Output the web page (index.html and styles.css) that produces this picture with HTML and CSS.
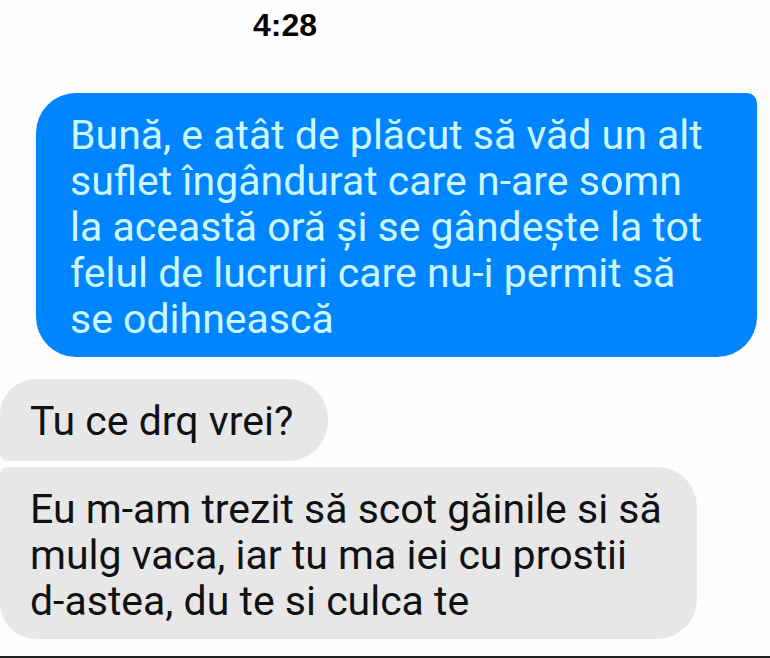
FILE: index.html
```html
<!DOCTYPE html>
<html lang="ro">
<head>
<meta charset="utf-8">
<meta name="viewport" content="width=device-width, initial-scale=1">
<title>Chat</title>
<link rel="stylesheet" href="styles.css">
</head>
<body>
<main class="chat">
  <time class="time">4:28</time>
  <p class="bubble sent">Bună, e atât de plăcut să văd un alt<br>suflet îngândurat care n-are somn<br>la această oră și se gândește la tot<br>felul de lucruri care nu-i permit să<br>se odihnească</p>
  <p class="bubble received first">Tu ce drq vrei?</p>
  <p class="bubble received last">Eu m-am trezit să scot găinile si să<br>mulg vaca, iar tu ma iei cu prostii<br>d-astea, du te si culca te</p>
</main>
</body>
</html>
```
FILE: styles.css
```css
* {
  box-sizing: border-box;
}

body {
  margin: 0;
  background: #fefefe;
}

.chat {
  display: flex;
  flex-direction: column;
  min-height: 100vh;
  border-bottom: 2px solid #222;
  font-family: Roboto, "Liberation Sans", sans-serif;
}

.time {
  margin: 6px 0 49px 253px;
  font: bold 32px/38px "Liberation Sans", Arial, sans-serif;
  color: #050505;
}

.bubble {
  margin: 0;
  font-size: 41px;
  line-height: 46px;
  white-space: nowrap;
}

.sent {
  margin: 0 13px 22px 36px;
  padding: 19px 34px 15px;
  border-radius: 40px 10px 40px 40px;
  background: #0084ff;
  color: #ccf8ff;
}

.received {
  align-self: flex-start;
  padding: 19px 35px 17px 30px;
  background: #e7e7e7;
  color: #111;
}

.first {
  margin-bottom: 6px;
  border-radius: 36px 40px 40px 8px;
}

.last {
  padding-bottom: 15px;
  border-radius: 8px 40px 40px 36px;
}
```
